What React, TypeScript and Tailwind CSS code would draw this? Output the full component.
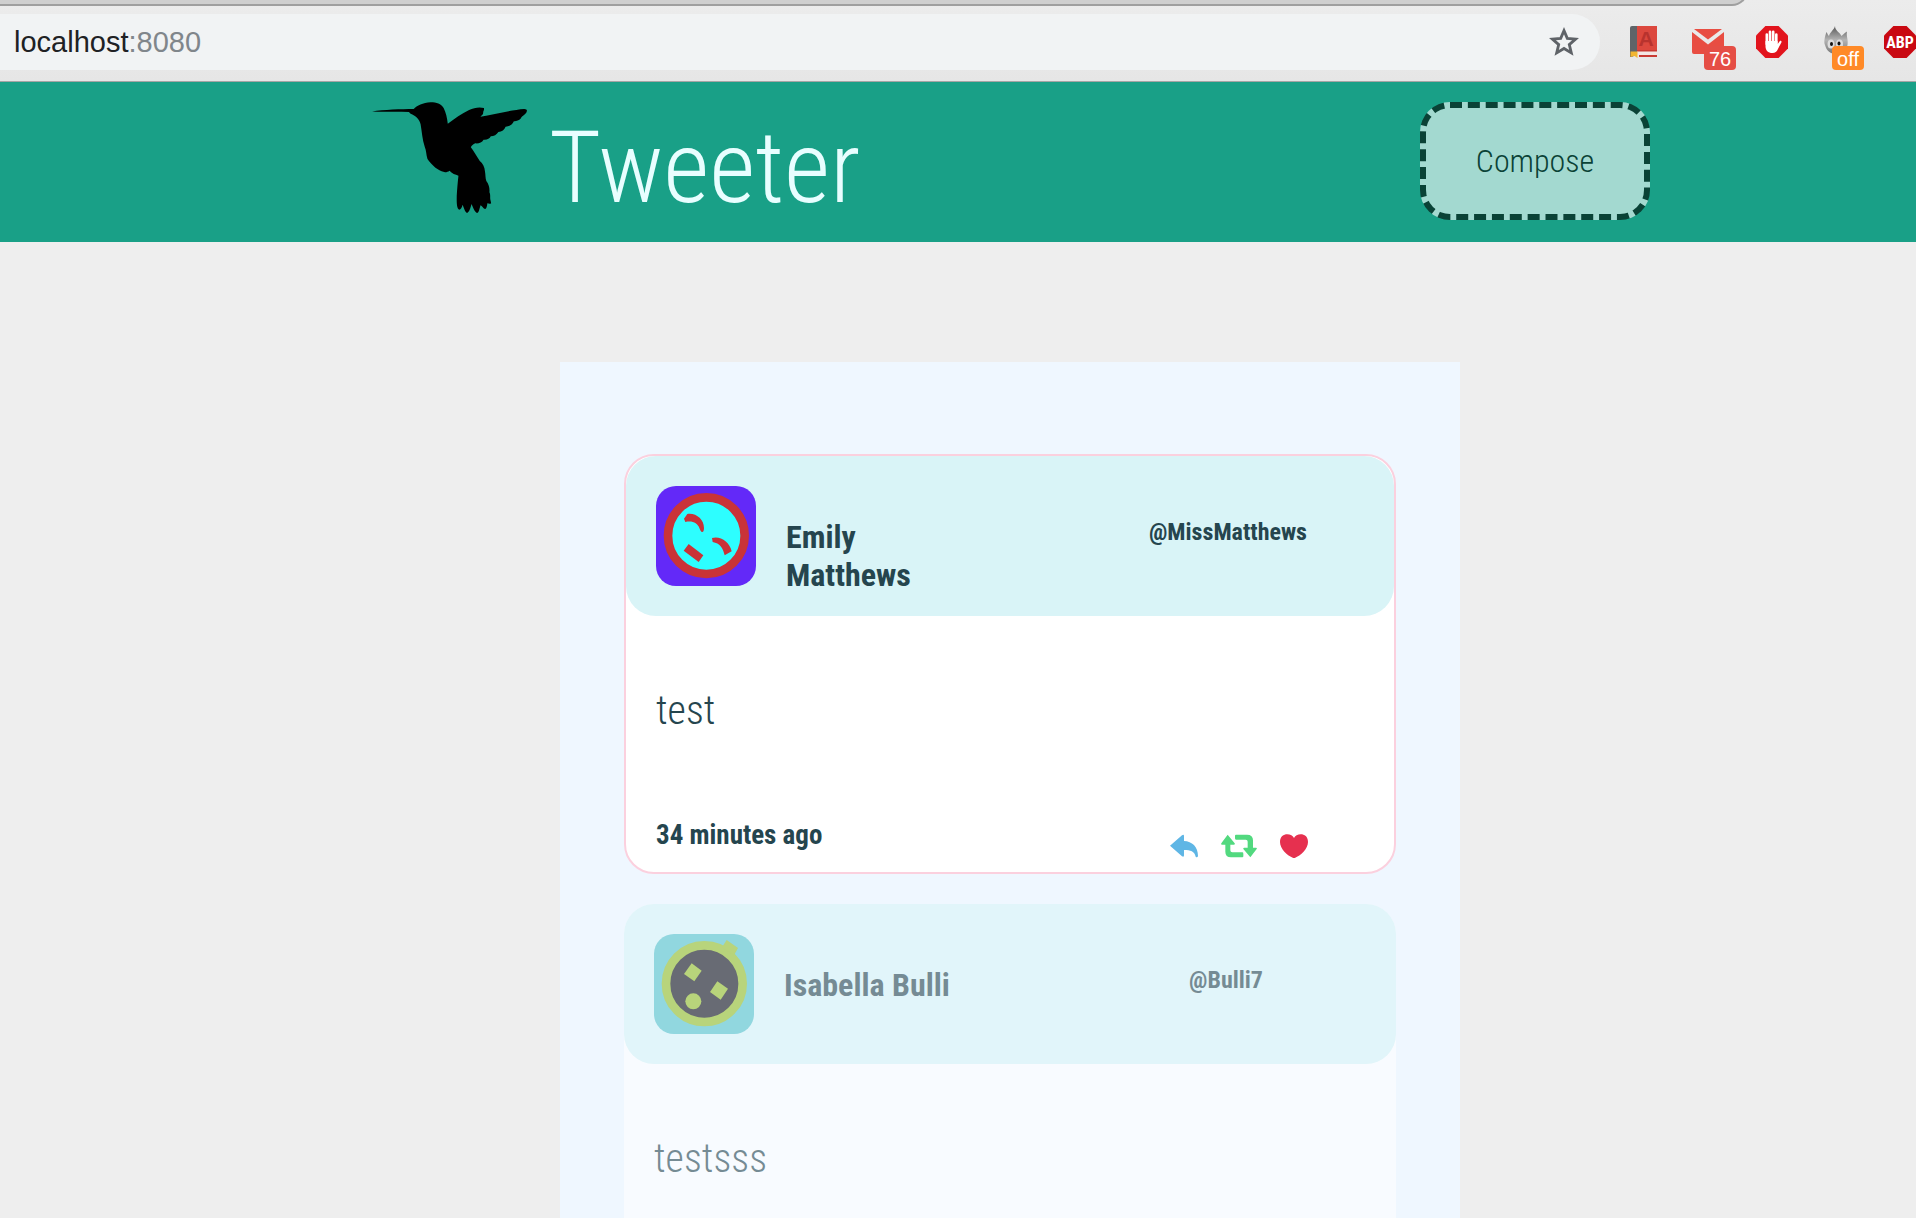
import React from "react";

const condensed = "font-['Roboto_Condensed','Roboto',sans-serif]";

function Star() {
  return (
    <svg viewBox="0 0 30 30" className="h-[30px] w-[30px]" fill="none" stroke="#5f6368" strokeWidth="2.8">
      <path d="M15 3.6 18.3 11.4 26.6 12.1 20.3 17.6 22.3 25.9 15 21.5 7.7 25.9 9.7 17.6 3.4 12.1 11.7 11.4Z" />
    </svg>
  );
}

function BookIcon() {
  return (
    <svg viewBox="0 0 32 32" className="h-8 w-8">
      <path d="M2 2a2 2 0 0 1 2-2h5v28l-5 3H2Z" fill="#5f6468" />
      <path d="M9 0h20v30H9Z" fill="#dc483e" />
      <path d="M9 25h20v5H9Z" fill="#f3e6e4" />
      <path d="M9 24h20v1.500H9ZM11 29h18v2H11Z" fill="#c93a33" />
      <path d="M2.500 25.500h7v6.500l-3-2-4 1Z" fill="#f2b632" />
      <text x="18" y="20" fontSize="21" fontWeight="700" textAnchor="middle" fill="#b8332e" fontFamily="Liberation Sans">
        A
      </text>
    </svg>
  );
}

function MailIcon() {
  return (
    <svg viewBox="0 0 32 32" className="h-8 w-8">
      <path d="M2 3h28L16 13.500Z" fill="#e84d42" />
      <path d="M0 6 16 18.500 32 6v22H2a2 2 0 0 1-2-2Z" fill="#e84d42" />
    </svg>
  );
}

function HandIcon() {
  return (
    <svg viewBox="0 0 32 32" className="h-8 w-8">
      <path d="M9.400 0h13.200L32 9.400v13.200L22.600 32H9.400L0 22.600V9.400Z" fill="#e2141d" />
      <g stroke="#fff" strokeWidth="2.600" strokeLinecap="round" fill="none">
        <path d="M10.800 18V8.500M14 16V5.800M17.200 16V5.800M20.300 17V8.500" />
      </g>
      <path d="M9.500 15h12l.2 3 2-2.800c1-.9 2.200 0 1.700 1.200l-3.700 7c-1 2.300-2.400 3.500-5.200 3.500-4.500 0-7-2.700-7-6.500Z" fill="#fff" />
    </svg>
  );
}

function FlameIcon() {
  return (
    <svg viewBox="0 0 32 32" className="h-8 w-8">
      <defs>
        <linearGradient id="flame" x1="0" y1="0" x2="0" y2="1">
          <stop offset="0" stopColor="#555" />
          <stop offset=".5" stopColor="#b4b4b4" />
          <stop offset="1" stopColor="#777" />
        </linearGradient>
      </defs>
      <path d="M15 0c0 5 5 6 6.500 10 1.500-1 2.500-3 5.500-4.500-1 4 1.500 8.500.5 13.500-1 6-6 9-11 9-6 0-10-3-11.500-9C3.500 16 5 10 6.500 6c1 1 1 3 2.500 4 1-4 5-6 6-10Z" fill="url(#flame)" />
      <ellipse cx="11" cy="18" rx="3.500" ry="4.500" fill="#ddd" />
      <ellipse cx="19.500" cy="18" rx="3.500" ry="4.500" fill="#ddd" />
      <ellipse cx="11.500" cy="18" rx="1.500" ry="2" fill="#111" />
      <ellipse cx="19" cy="17.500" rx="1.500" ry="2" fill="#111" />
    </svg>
  );
}

function AbpIcon() {
  return (
    <svg viewBox="0 0 32 32" className="h-8 w-8">
      <path d="M9.400 0h13.200L32 9.400v13.200L22.600 32H9.400L0 22.600V9.400Z" fill="#c90912" />
      <text x="16" y="22" fontSize="16" fontWeight="700" textAnchor="middle" fill="#fff" fontFamily="Roboto Condensed, Open Sans">
        ABP
      </text>
    </svg>
  );
}

function Extension({ label, badge, badgeClass, children }: { label: string; badge?: string; badgeClass?: string; children: React.ReactNode }) {
  return (
    <button aria-label={label} className="relative h-8 w-8 shrink-0">
      {children}
      {badge && (
        <span className={`absolute top-5 left-3 h-6 w-8 rounded text-center text-[20px] leading-[27px] text-white ${badgeClass}`}>{badge}</span>
      )}
    </button>
  );
}

function BrowserBar() {
  return (
    <div className="shrink-0 border-b border-[#a5a5a5] bg-linear-to-b from-[#ececec] to-[#e6e6e6] font-['Liberation_Sans',sans-serif]">
      <div className="mr-[168px] flex h-[6px] items-end overflow-hidden">
        <div className="h-6 flex-1 rounded-br-[16px] border-r-2 border-b-2 border-[#9f9f9f] bg-[#cfcfcf]" />
      </div>
      <div className="flex items-center pt-2 pb-[11px]">
        <div className="mr-7 flex h-14 flex-1 items-center justify-between rounded-r-full bg-[#f1f3f4] pr-[21px] pl-[14px]">
          <span className="text-[29px] leading-8 text-[#202124]">
            localhost<span className="text-[#80868b]">:8080</span>
          </span>
          <button aria-label="Bookmark"><Star /></button>
        </div>
        <div className="flex gap-8">
          <Extension label="Dictionary"><BookIcon /></Extension>
          <Extension label="Mail" badge="76" badgeClass="bg-[#e54e45]"><MailIcon /></Extension>
          <Extension label="Blocker"><HandIcon /></Extension>
          <Extension label="Unblocker" badge="off" badgeClass="bg-[#ff8a27]"><FlameIcon /></Extension>
          <Extension label="ABP"><AbpIcon /></Extension>
        </div>
      </div>
    </div>
  );
}

function Hummingbird() {
  return (
    <svg viewBox="60 60 462 345" preserveAspectRatio="none" className="h-[115px] w-[159px]" aria-hidden="true">
      <path d="M66 94.500C100 89 150 87 187 87C196 77 214 68 236 67C254 67 266 72 274 84C281 98 284 115 286 131C306 117 326 100 348 90C362 83 378 80 391 84C393 90 388 94 389 98C389 104 384 106 381 110C420 104 470 90 508 87C516 87 518 92 514 98C509 104 502 108 499 113C496 121 486 122 478 124C474 133 466 140 454 140C451 149 443 155 433 156C428 164 420 169 411 169C408 177 399 180 390 179C385 188 376 191 366 190C360 192 355 197 353 202C360 212 370 228 379 243C388 250 393 262 394 274C396 286 395 295 398 303C406 313 408 326 407 337C411 344 408 354 410 360L412 370C408 373 405 371 401 370C400 380 398 388 394 387C388 385 386 378 381 376C378 388 376 398 371 399C365 397 360 384 355 372C352 384 348 397 342 399C336 396 333 384 329 374C327 382 324 389 319 389C311 386 312 362 312 348C313 328 315 305 317 287C308 283 298 281 291 272C285 277 276 278 268 274C252 267 236 251 227 237C223 223 224 212 219 200C212 180 211 155 207 133C204 117 192 107 178 101L173 96C140 94 100 96 66 94.500Z" />
    </svg>
  );
}

function Header() {
  return (
    <header className="shrink-0 bg-[#19a087] pl-[104px]">
      <div className="mx-auto flex h-40 max-w-[1280px] items-start justify-between">
        <div className="flex items-start pt-[18px]">
          <Hummingbird />
          <h1 className={`ml-5 pt-2 text-[100px] leading-[120px] font-light text-[#e8feff] ${condensed}`}>Tweeter</h1>
        </div>
        <button className={`mt-5 h-[118px] w-[230px] rounded-[30px] border-[6px] border-dashed border-[#0a4236] bg-[#a3d9d0] text-[32px] leading-10 font-light text-[#0a4236] ${condensed}`}>
          Compose
        </button>
      </div>
    </header>
  );
}

function EmilyAvatar() {
  return (
    <svg viewBox="0 0 300 300" className="h-[100px] w-[100px] rounded-[20px]" role="img" aria-label="Emily Matthews">
      <path d="M0 0h300v300H0Z" fill="#6329f8" />
      <circle cx="151" cy="149" r="115" fill="#2dfeff" stroke="#c93338" strokeWidth="26" />
      <g fill="#c93338">
        <path d="M94 84C120 80 144 100 144 126C144 142 136 142 131 128C124 110 110 104 88 108L84 98Z" />
        <path d="M168 156C192 148 222 168 227 196L206 208C200 184 192 172 170 168Z" />
        <path d="M98 174 142 208 128 228 83 194Z" />
      </g>
    </svg>
  );
}

function IsabellaAvatar() {
  return (
    <svg viewBox="0 0 300 300" className="h-[100px] w-[100px] rounded-[20px]" role="img" aria-label="Isabella Bulli">
      <path d="M0 0h300v300H0Z" fill="#53c2cb" />
      <circle cx="151" cy="149" r="115" fill="#0f0f18" stroke="#94bd24" strokeWidth="26" />
      <g fill="#94bd24">
        <path d="M218 18 252 42 240 64 204 40Z" />
        <path d="M113 88 143 110 121 142 90 120Z" />
        <path d="M190 142 222 164 200 197 168 174Z" />
        <circle cx="118" cy="202" r="24" />
      </g>
    </svg>
  );
}

function ReplyIcon() {
  return (
    <svg viewBox="0 0 84 68" className="h-6 w-7" fill="#5fb6e5">
      <path d="M0 33 36 2Q42-2 42 4V19C66 20 84 36 84 64Q82 70 77 66C73 50 62 46 42 46V62Q42 69 36 65Z" />
    </svg>
  );
}

function RetweetIcon() {
  return (
    <svg viewBox="0 0 108 70" className="h-6 w-9" fill="#52d97f">
      <path d="M20 1 41 27Q43 31 38 31H28V48Q28 54 34 54H64Q67 54 67 58V66Q67 69 64 69H30Q13 69 13 52V31H3Q-1 31 1 27Z" />
      <path d="M88 69 67 44Q66 40 70 40H80V22Q80 16 74 16H45Q42 16 42 12V4Q42 1 45 1H78Q96 1 96 18V40H105Q109 40 107 44Z" />
    </svg>
  );
}

function HeartIcon() {
  return (
    <svg viewBox="0 0 84 72" className="h-6 w-7" fill="#e6304f">
      <path d="M42 12C48-3 84-6 84 24C84 46 60 66 42 73C24 66 0 46 0 24C0-6 36-3 42 12Z" />
    </svg>
  );
}

type TweetProps = {
  avatar: React.ReactNode;
  name: string;
  handle: string;
  text: string;
  age?: string;
  active?: boolean;
};

function Tweet({ avatar, name, handle, text, age, active }: TweetProps) {
  return (
    <article className={`rounded-[30px] bg-white text-[#25454e] ${active ? "border-2 border-[#fbd0de]" : "opacity-60"}`}>
      <header className="flex h-40 items-start rounded-[30px] bg-[#d9f4f7] px-[30px]">
        <div className="mt-[30px] shrink-0">{avatar}</div>
        <h2 className="mt-[62px] ml-[30px] w-[180px] text-[32px] leading-[38px] font-bold">{name}</h2>
        <span className="mt-[62px] ml-[182px] w-[160px] text-center text-[24px] leading-7 font-bold">{handle}</span>
      </header>
      <p className="px-[30px] pt-[71px] text-[40px] leading-[48px] font-light">{text}</p>
      <footer className="flex items-start justify-between pt-[85px] pr-[86px] pb-[22px] pl-[30px]">
        <time className="text-[27px] leading-[30px] font-bold">{age}</time>
        <div className="mt-[14px] -mb-2 flex gap-[23px]">
          <button aria-label="Reply"><ReplyIcon /></button>
          <button aria-label="Retweet"><RetweetIcon /></button>
          <button aria-label="Like"><HeartIcon /></button>
        </div>
      </footer>
    </article>
  );
}

export default function App() {
  return (
    <div className="flex h-screen flex-col bg-[#eeeeee]">
      <BrowserBar />
      <Header />
      <main className="flex-1 overflow-y-auto pt-[120px] pl-[104px] [scrollbar-width:none]">
        <section className={`mx-auto flex max-w-[900px] flex-col gap-[30px] bg-[#eff7ff] px-16 pt-[92px] pb-16 ${condensed}`}>
          <Tweet active avatar={<EmilyAvatar />} name="Emily Matthews" handle="@MissMatthews" text="test" age="34 minutes ago" />
          <Tweet avatar={<IsabellaAvatar />} name="Isabella Bulli" handle="@Bulli7" text="testsss" />
        </section>
      </main>
    </div>
  );
}
